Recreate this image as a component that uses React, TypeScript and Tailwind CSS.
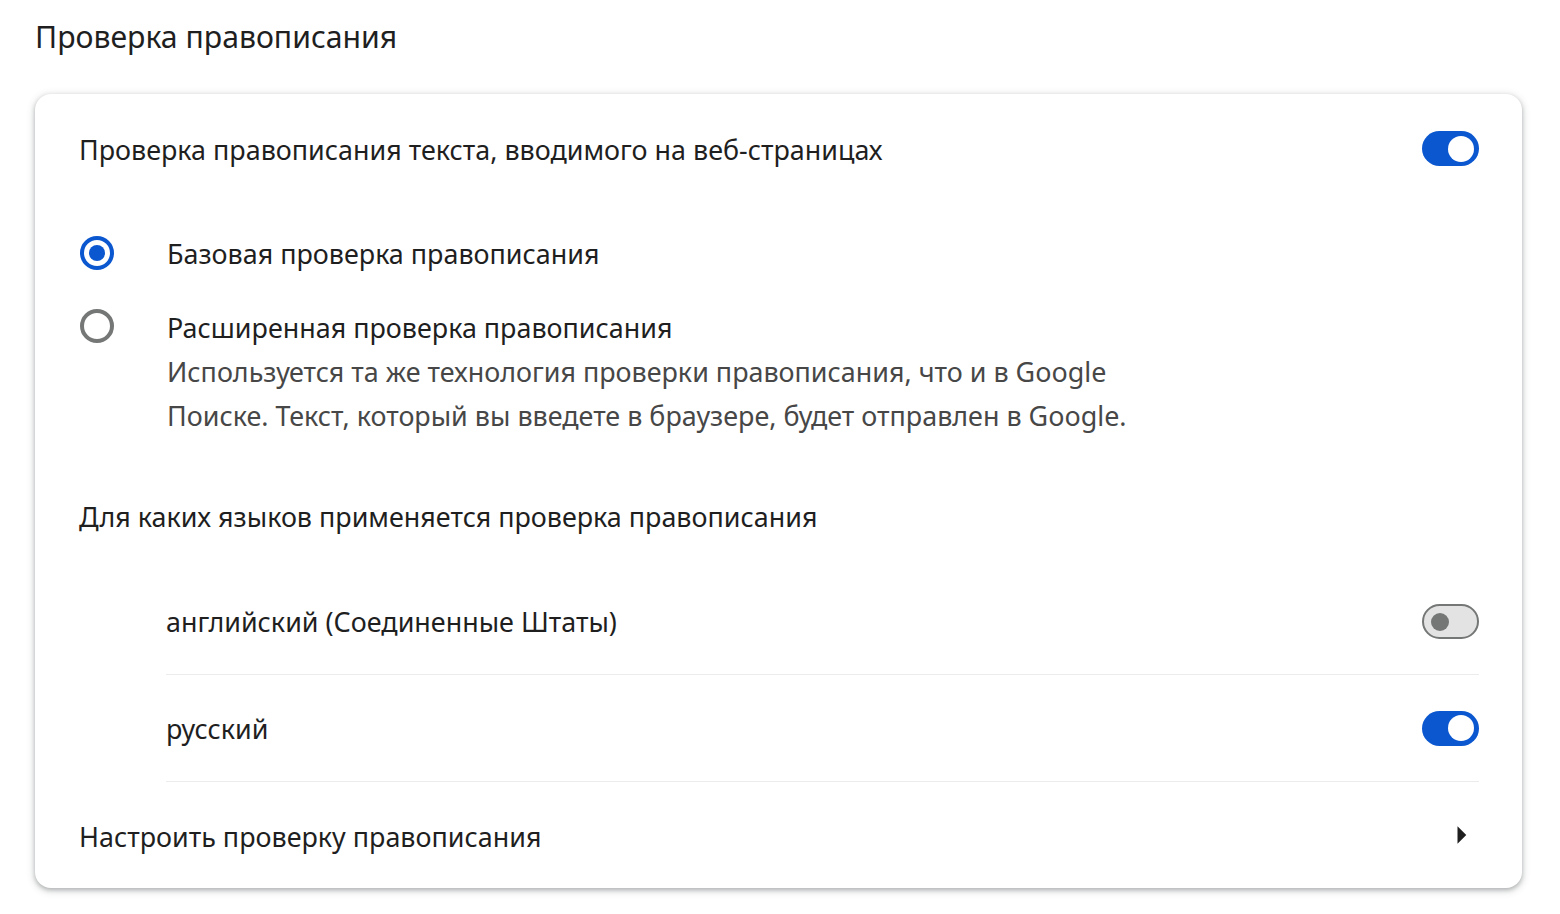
import React from "react";

const font = { fontFamily: '"Noto Sans", "Open Sans", sans-serif' };

function Toggle({ on }: { on: boolean }) {
  if (on) {
    return (
      <div className="relative h-[35px] w-[57px] shrink-0 rounded-full bg-[#0b57d0]">
        <div className="absolute right-[5px] top-1/2 h-[26px] w-[26px] -translate-y-1/2 rounded-full bg-white" />
      </div>
    );
  }
  return (
    <div className="relative h-[35px] w-[57px] shrink-0 rounded-full border-2 border-[#747775] bg-[#e3e3e3]">
      <div className="absolute left-[7px] top-1/2 h-[18px] w-[18px] -translate-y-1/2 rounded-full bg-[#747775]" />
    </div>
  );
}

function Radio({ on }: { on: boolean }) {
  return (
    <div
      className={
        on
          ? "flex h-[34px] w-[34px] shrink-0 items-center justify-center rounded-full border-[4px] border-[#0b57d0]"
          : "flex h-[34px] w-[34px] shrink-0 items-center justify-center rounded-full border-[4px] border-[#747775]"
      }
    >
      {on && <div className="h-[16px] w-[16px] rounded-full bg-[#0b57d0]" />}
    </div>
  );
}

export default function App() {
  return (
    <div className="min-h-[914px] bg-white text-[#1f1f1f]" style={font}>
      <div className="pl-[35px] pr-[38px]">
        <div className="flex h-[94px] items-start pt-[16px]">
          <h1 className="text-[30.2px] font-normal leading-[42px]">Проверка правописания</h1>
        </div>
        <div className="rounded-[16px] bg-white pl-[44px] pr-[43px] shadow-[0_2px_4px_0_rgba(60,64,67,0.3),0_2px_7px_2px_rgba(60,64,67,0.15)]">
          <div className="flex h-[109px] items-center justify-between text-[26.9px] leading-[44px]">
            <span className="pt-[2px]">Проверка правописания текста, вводимого на веб-страницах</span>
            <Toggle on />
          </div>
          <div className="flex h-[99px] items-center text-[26.9px] leading-[44px]">
            <div className="ml-[1px] w-[87px]">
              <Radio on />
            </div>
            <span className="pt-[3px]">Базовая проверка правописания</span>
          </div>
          <div className="flex pt-[4px] text-[26.9px] leading-[44px]">
            <div className="ml-[1px] w-[87px] pt-[3px]">
              <Radio on={false} />
            </div>
            <div>
              <div>Расширенная проверка правописания</div>
              <div className="text-[#474747]">
                Используется та же технология проверки правописания, что и в Google
                <br />
                Поиске. Текст, который вы введете в браузере, будет отправлен в Google.
              </div>
            </div>
          </div>
          <div className="pt-[57px] text-[26.9px] leading-[44px]">Для каких языков применяется проверка правописания</div>
          <div className="pl-[87px] pt-[30px] text-[26.9px] leading-[44px]">
            <div className="flex h-[106px] items-center justify-between border-b border-[#ececec]">
              <span className="pt-[1px]">английский (Соединенные Штаты)</span>
              <Toggle on={false} />
            </div>
            <div className="flex h-[107px] items-center justify-between border-b border-[#ececec]">
              <span className="pt-[1px]">русский</span>
              <Toggle on />
            </div>
          </div>
          <div className="flex h-[106px] items-center justify-between text-[26.9px] leading-[44px]">
            <span className="pt-[3px]">Настроить проверку правописания</span>
            <svg width="42" height="42" viewBox="0 0 24 24" className="mr-[-3px] shrink-0">
              <path d="M10 17l5-5-5-5v10z" fill="#1f1f1f" />
            </svg>
          </div>
        </div>
      </div>
    </div>
  );
}
